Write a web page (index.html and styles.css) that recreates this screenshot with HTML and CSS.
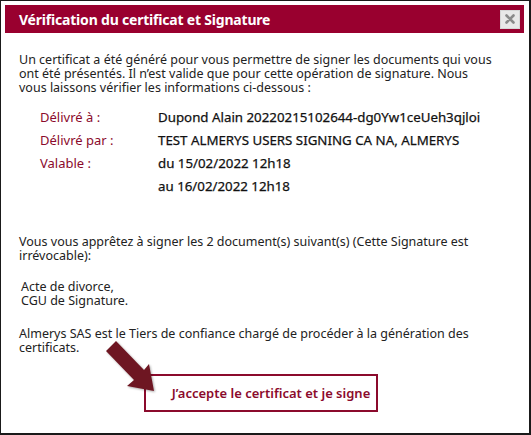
FILE: index.html
```html
<!DOCTYPE html>
<html lang="fr">
<head>
    <meta charset="UTF-8">
    <meta name="viewport" content="width=device-width, initial-scale=1.0">
    <title>Vérification du certificat et Signature</title>
    <link rel="stylesheet" href="styles.css">
</head>
<body>

    <div class="dialog">
        <div class="titlebar">
            <span class="title">Vérification du certificat et Signature</span>
            <button class="close" aria-label="Fermer">
                <svg width="10" height="10" viewBox="0 0 10 10">
                    <path d="M1.5 1.5 L8.5 8.5 M8.5 1.5 L1.5 8.5" stroke="#8a8a8a" stroke-width="2.6" stroke-linecap="round"/>
                </svg>
            </button>
        </div>

        <div class="content">
            <p class="intro">Un certificat a été généré pour vous permettre de signer les documents qui vous ont été présentés. Il n’est valide que pour cette opération de signature. Nous<br>vous laissons vérifier les informations ci-dessous :</p>

            <div class="details">
                <div class="label">Délivré à :</div>
                <div class="value">Dupond Alain 20220215102644-dg0Yw1ceUeh3qjloi</div>
                <div class="label">Délivré par :</div>
                <div class="value">TEST ALMERYS USERS SIGNING CA NA, ALMERYS</div>
                <div class="label">Valable :</div>
                <div class="value">du 15/02/2022 12h18<br>au 16/02/2022 12h18</div>
            </div>

            <p class="docs-intro">Vous vous apprêtez à signer les 2 document(s) suivant(s) (Cette Signature est irrévocable):</p>

            <p class="docs">Acte de divorce,<br>CGU de Signature.</p>

            <p class="notice">Almerys SAS est le Tiers de confiance chargé de procéder à la génération des certificats.</p>

            <div class="actions">
                <button class="accept">J’accepte le certificat et je signe</button>
                <svg class="arrow" width="60" height="62" viewBox="0 0 60 62">
                    <defs>
                        <filter id="shadow" x="-20%" y="-20%" width="150%" height="150%">
                            <feDropShadow dx="1" dy="1" stdDeviation="1.2" flood-color="#000" flood-opacity="0.35"/>
                        </filter>
                    </defs>
                    <g filter="url(#shadow)">
                        <path d="M6 4 L34 33 L39 27 L44 54 L17 49 L24 43 L-4 14 Z" fill="#6e1824" transform="translate(4 0)"/>
                    </g>
                </svg>
            </div>
        </div>
    </div>

</body>
</html>
```

FILE: styles.css
```css
body {
    margin: 0;
    font-family: 'Noto Sans', 'Open Sans', sans-serif;
    background-color: #fff;
}

.dialog {
    box-sizing: border-box;
    width: 531px;
    height: 435px;
    padding: 4px 5px 0 4px;
    border-style: solid;
    border-color: #1a1a1a;
    border-width: 1px 2px 2px 1px;
    background-color: #fff;
}

.titlebar {
    display: flex;
    align-items: center;
    justify-content: space-between;
    height: 28px;
    padding: 0 4px 0 14px;
    background-color: #99002f;
}

.title {
    color: #fff;
    font-size: 14px;
    font-weight: bold;
    letter-spacing: -0.2px;
}

.close {
    display: flex;
    align-items: center;
    justify-content: center;
    width: 20px;
    height: 19px;
    padding: 0;
    border: 1px solid #d6d6d6;
    background-color: #e8e8e8;
}

.content {
    padding: 0 14px;
    font-size: 12.5px;
    line-height: 14px;
    color: #222;
}

.content p {
    margin: 0;
}

.intro {
    margin-top: 20px !important;
}

.details {
    display: grid;
    grid-template-columns: 118px 1fr;
    margin: 11px 0 0 21px;
    font-size: 13px;
    line-height: 23px;
}

.details .label {
    color: #8b0a2c;
}

.details .value {
    color: #111;
    font-size: 13.3px;
    -webkit-text-stroke: 0.25px #111;
}

.docs-intro {
    margin-top: 37px !important;
}

.docs {
    margin-top: 17px !important;
    padding-left: 2px;
}

.notice {
    margin-top: 19px !important;
}

.actions {
    position: relative;
    padding: 19px 0 0 125px;
}

.accept {
    width: 234px;
    height: 38px;
    padding: 0 0 0 20px;
    border: 2px solid #8b0a2c;
    background-color: #fff;
    color: #8b0a2c;
    font-family: 'Noto Sans', 'Open Sans', sans-serif;
    font-size: 13px;
    font-weight: 600;
    white-space: nowrap;
}

.arrow {
    position: absolute;
    left: 87px;
    top: -18px;
}
```
